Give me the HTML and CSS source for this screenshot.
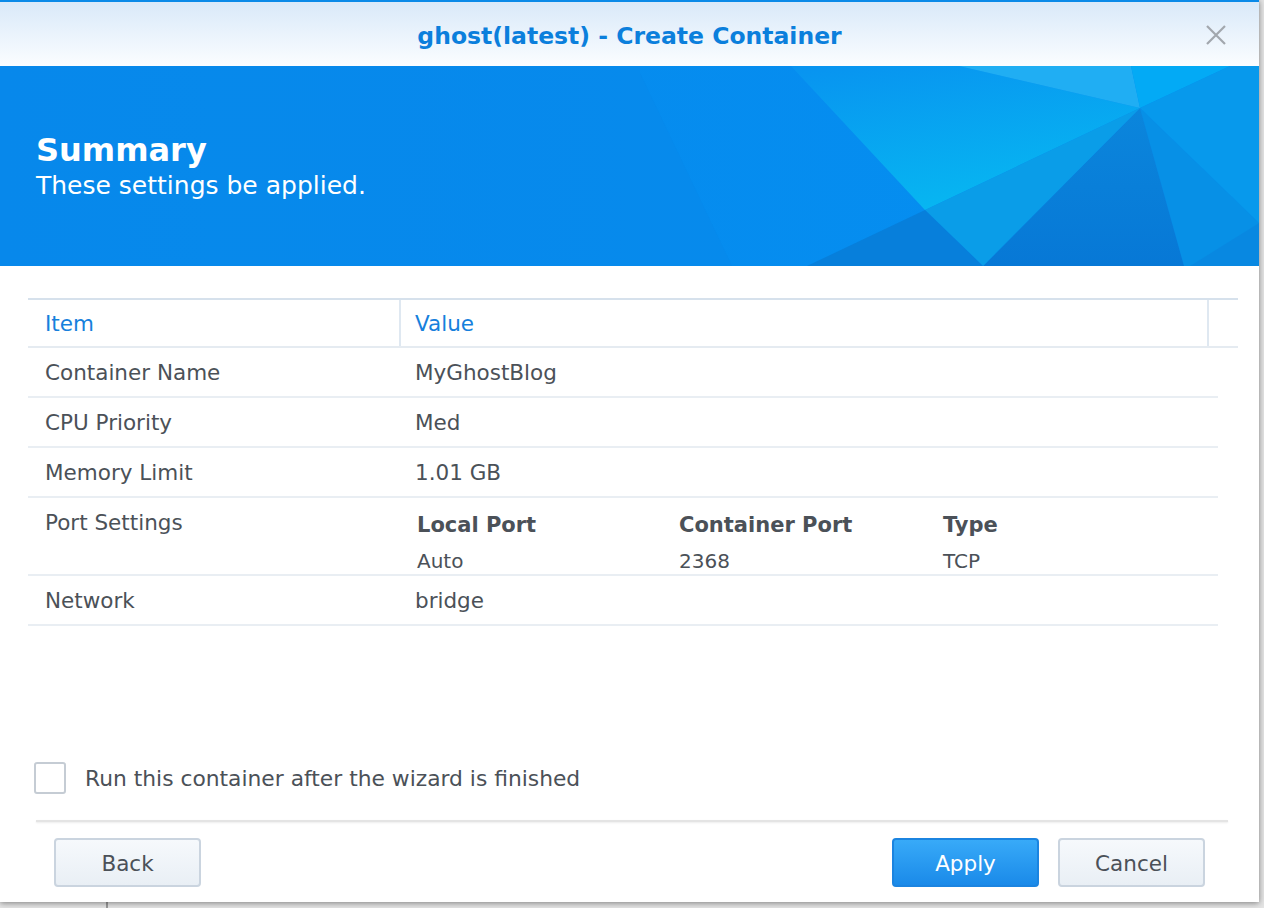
FILE: index.html
```html
<!DOCTYPE html>
<html lang="en">
<head>
    <meta charset="UTF-8">
    <meta name="viewport" content="width=device-width, initial-scale=1.0">
    <title>ghost(latest) - Create Container</title>
    <link rel="stylesheet" href="styles.css">
</head>
<body>

    <div class="window">
        <div class="titlebar">
            <div></div>
            <div class="title">ghost(latest) - Create Container</div>
            <div class="close-cell">
                <svg class="close-icon" width="22" height="22" viewBox="0 0 22 22">
                    <path d="M2 2 L20 20 M20 2 L2 20" stroke="#a2a7ad" stroke-width="2.2" fill="none"/>
                </svg>
            </div>
        </div>

        <div class="banner">
            <!-- decorative facets behind the banner text -->
            <svg class="banner-bg" width="1259" height="200" viewBox="0 0 1259 200" preserveAspectRatio="none">
                <defs>
                    <linearGradient id="base" x1="0" y1="0" x2="1" y2="0">
                        <stop offset="0" stop-color="#0689ec"/>
                        <stop offset="1" stop-color="#058ff1"/>
                    </linearGradient>
                    <linearGradient id="mid" x1="0" y1="0" x2="0.4" y2="1">
                        <stop offset="0" stop-color="#0893f0"/>
                        <stop offset="1" stop-color="#07b6f1"/>
                    </linearGradient>
                    <linearGradient id="dark" x1="0" y1="0" x2="0" y2="1">
                        <stop offset="0" stop-color="#0b86dc"/>
                        <stop offset="1" stop-color="#0778d6"/>
                    </linearGradient>
                </defs>
                <rect x="0" y="0" width="1259" height="200" fill="url(#base)"/>
                <polygon points="640,7 732,200 0,200 0,0 640,0" fill="#0788ea" opacity="0.5"/>
                <polygon points="791,0 959,0 1140,42 925,144" fill="url(#mid)"/>
                <polygon points="959,0 1131,0 1140,42" fill="#20aef3"/>
                <polygon points="1131,0 1230,0 1140,42" fill="#03aaf5"/>
                <polygon points="1230,0 1259,0 1259,157 1140,42" fill="#0799ec"/>
                <polygon points="1140,42 1259,157 1259,200 1184,200" fill="#0790e6"/>
                <polygon points="1140,42 1184,200 983,200" fill="url(#dark)"/>
                <polygon points="1140,42 983,200 925,144" fill="#0a9de8"/>
                <polygon points="925,144 983,200 807,200" fill="#077fdb"/>
                <polygon points="1259,157 1259,200 1190,200" fill="#0a84dd" opacity="0.6"/>
            </svg>
            <div class="banner-text">
                <h1>Summary</h1>
                <p>These settings be applied.</p>
            </div>
        </div>

        <div class="content">
            <div class="grid">
                <div class="grid-head">
                    <div class="head-cell">Item</div>
                    <div class="head-cell divider">Value</div>
                    <div class="head-cell divider"></div>
                </div>

                <div class="grid-row">
                    <div class="cell">Container Name</div>
                    <div class="cell value">MyGhostBlog</div>
                </div>
                <div class="grid-row">
                    <div class="cell">CPU Priority</div>
                    <div class="cell value">Med</div>
                </div>
                <div class="grid-row">
                    <div class="cell">Memory Limit</div>
                    <div class="cell value">1.01 GB</div>
                </div>
                <div class="grid-row port-row">
                    <div class="cell">Port Settings</div>
                    <div class="cell value">
                        <div class="port-table">
                            <div class="port-head">Local Port</div>
                            <div class="port-head">Container Port</div>
                            <div class="port-head">Type</div>
                            <div class="port-val">Auto</div>
                            <div class="port-val">2368</div>
                            <div class="port-val">TCP</div>
                        </div>
                    </div>
                </div>
                <div class="grid-row">
                    <div class="cell">Network</div>
                    <div class="cell value">bridge</div>
                </div>
            </div>

            <div class="bottom">
                <label class="check-row">
                    <span class="checkbox"></span>
                    <span>Run this container after the wizard is finished</span>
                </label>
            </div>
        </div>

        <div class="separator"></div>

        <div class="footer">
            <button class="btn">Back</button>
            <div class="spacer"></div>
            <button class="btn btn-primary">Apply</button>
            <button class="btn">Cancel</button>
        </div>
    </div>

</body>
</html>
```

FILE: styles.css
```css
body {
    margin: 0;
    width: 1264px;
    height: 908px;
    overflow: hidden;
    font-family: "DejaVu Sans", Verdana, sans-serif;
    color: #4b5158;
    background: linear-gradient(to right, transparent 106px, #9a9a9a 106px, #9a9a9a 108px, transparent 108px), #e4e4e4;
}

.window {
    width: 1259px;
    height: 902px;
    background-color: #ffffff;
    box-shadow: 0 1px 6px rgba(0, 0, 0, 0.45);
    display: flex;
    flex-direction: column;
}

.titlebar {
    height: 64px;
    border-top: 2px solid #0a8ae8;
    background: linear-gradient(to bottom, #d9e9f9, #fbfdff);
    display: grid;
    grid-template-columns: 1fr auto 1fr;
    align-items: center;
}

.title {
    font-size: 23.5px;
    font-weight: bold;
    color: #0b7fdc;
    padding-top: 3px;
}

.close-cell {
    display: flex;
    justify-content: flex-end;
    padding-right: 32px;
    padding-top: 2px;
}

.close-icon {
    display: block;
}

.banner {
    position: relative;
    height: 200px;
    overflow: hidden;
}

.banner-bg {
    position: absolute;
    left: 0;
    top: 0;
}

.banner-text {
    position: relative;
    padding: 64px 0 0 36px;
    color: #ffffff;
}

.banner-text h1 {
    margin: 0;
    font-size: 32px;
    line-height: 40px;
    font-weight: bold;
}

.banner-text p {
    margin: 0;
    font-size: 25px;
    line-height: 32px;
}

.content {
    flex: 1;
    display: flex;
    flex-direction: column;
    padding: 32px 0 0 28px;
}

.grid {
    width: 1210px;
}

.grid-head {
    display: grid;
    grid-template-columns: 371px 808px 31px;
    border-top: 2px solid #d6e1ec;
    border-bottom: 2px solid #e5ebf1;
}

.head-cell {
    height: 46px;
    line-height: 48px;
    font-size: 21.5px;
    color: #1680dc;
    padding-left: 17px;
}

.head-cell.divider {
    border-left: 2px solid #dfe8f1;
    padding-left: 14px;
}

.grid-row {
    width: 1190px;
    display: grid;
    grid-template-columns: 373px 1fr;
    border-bottom: 2px solid #e9eef3;
}

.cell {
    height: 48px;
    line-height: 50px;
    font-size: 21.5px;
    padding-left: 17px;
    white-space: nowrap;
}

.cell.value {
    padding-left: 14px;
}

.port-row .cell {
    height: 76px;
    line-height: 24px;
    padding-top: 13px;
    box-sizing: border-box;
}

.port-row .cell.value {
    padding-top: 0;
    padding-left: 16px;
}

.port-table {
    display: grid;
    grid-template-columns: 262px 264px 1fr;
}

.port-head {
    font-weight: bold;
    font-size: 21px;
    line-height: 28px;
    padding-top: 13px;
}

.port-val {
    font-size: 20px;
    line-height: 28px;
    margin-top: 8px;
}

.bottom {
    margin-top: auto;
    padding-left: 6px;
    padding-bottom: 26px;
}

.check-row {
    display: flex;
    align-items: center;
    gap: 19px;
    font-size: 21.8px;
}

.checkbox {
    width: 28px;
    height: 28px;
    border: 2px solid #c5ccd4;
    border-radius: 3px;
    background-color: #ffffff;
}

.separator {
    margin: 0 31px 0 36px;
    height: 2px;
    background-color: #e4e4e4;
    box-shadow: 0 1px 2px rgba(0, 0, 0, 0.08);
}

.footer {
    display: flex;
    gap: 19px;
    padding: 16px 54px 15px 54px;
}

.spacer {
    flex: 1;
}

.btn {
    width: 147px;
    height: 49px;
    padding-top: 3px;
    font-family: "DejaVu Sans", Verdana, sans-serif;
    font-size: 21.5px;
    color: #4b5158;
    background: linear-gradient(to bottom, #f6f9fc, #e9eff5);
    border: 2px solid #cad4df;
    border-radius: 4px;
    cursor: pointer;
}

.btn-primary {
    color: #ffffff;
    background: linear-gradient(to bottom, #38aaf8, #1a8ae9);
    border-color: #1b84e0;
}
```
